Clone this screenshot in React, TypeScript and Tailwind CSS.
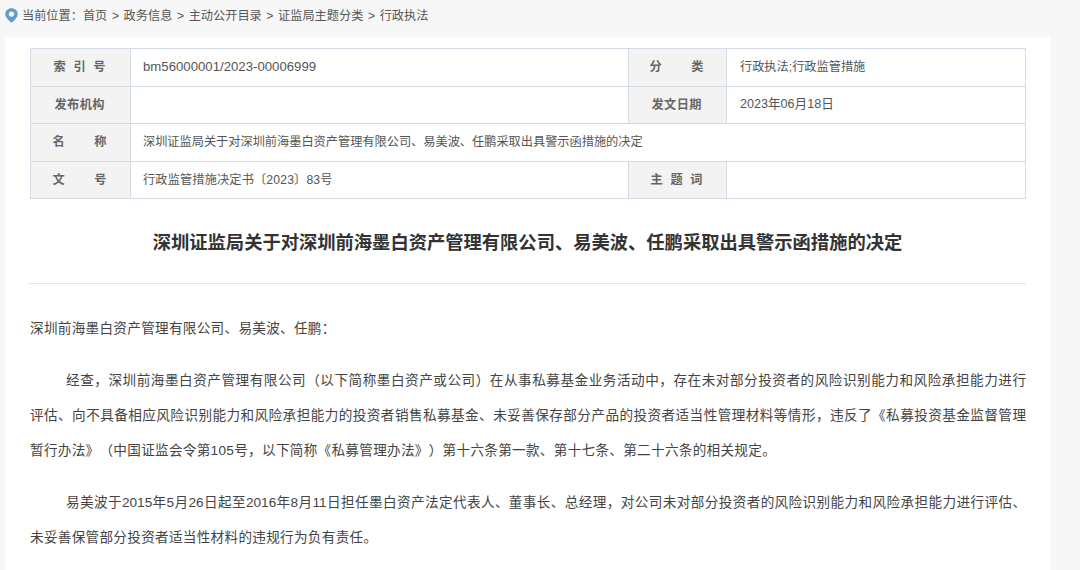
const cjk = "font-['Liberation_Sans','Noto_Sans_CJK_SC',sans-serif]";

function PinIcon() {
  return (
    <svg width="13" height="15" viewBox="0 0 13 15" className="shrink-0">
      <path d="M6.5 0.2C3 0.2 0.3 2.8 0.3 6.1c0 3.6 3.8 6.9 6.2 8.7 2.4-1.8 6.2-5.1 6.2-8.7C12.7 2.8 10 0.2 6.5 0.2z" fill="#5f9dc6" />
      <circle cx="6.5" cy="6.1" r="2.7" fill="#f7f7f7" />
    </svg>
  );
}

function Label({ chars, wide, width = 'w-[50px]' }: { chars: string[]; wide?: boolean; width?: string }) {
  return (
    <td className={`bg-[#f3f3f3] border border-[#d3dbe6] py-0 pl-0 pr-[2px] ${wide ? 'w-[100px]' : 'w-[98px]'}`}>
      <div className={`mx-auto flex justify-between font-semibold text-[#666] ${width}`}>
        {chars.map((c) => (
          <span key={c}>{c}</span>
        ))}
      </div>
    </td>
  );
}

function Value({ children, colSpan, right }: { children?: React.ReactNode; colSpan?: number; right?: boolean }) {
  return (
    <td colSpan={colSpan} className={`border border-[#d3dbe6] py-0 text-[#555] ${right ? 'pl-[13px]' : 'pl-[12px]'}`}>
      {children}
    </td>
  );
}

function InfoTable() {
  return (
    <table className="ml-px w-[996px] table-fixed border-collapse text-[12.2px] [text-spacing-trim:space-all]">
      <colgroup>
        <col className="w-[100px]" />
        <col className="w-[498px]" />
        <col className="w-[98px]" />
        <col />
      </colgroup>
      <tbody>
        <tr className="h-[37.5px]">
          <Label wide chars={['索', '引', '号']} width="w-[52px]" />
          <Value><span className="text-[13.2px]">bm56000001/2023-00006999</span></Value>
          <Label chars={['分', '类']} width="w-[54px]" />
          <Value right>行政执法;行政监管措施</Value>
        </tr>
        <tr className="h-[37.5px]">
          <Label wide chars={['发', '布', '机', '构']} />
          <Value />
          <Label chars={['发', '文', '日', '期']} />
          <Value right><span className="text-[12.6px]">2023年06月18日</span></Value>
        </tr>
        <tr className="h-[37.5px]">
          <Label wide chars={['名', '称']} width="w-[54px]" />
          <Value colSpan={3}>深圳证监局关于对深圳前海墨白资产管理有限公司、易美波、任鹏采取出具警示函措施的决定</Value>
        </tr>
        <tr className="h-[37.5px]">
          <Label wide chars={['文', '号']} width="w-[54px]" />
          <Value><span className="tracking-[0.15px]">行政监管措施决定书〔2023〕83号</span></Value>
          <Label chars={['主', '题', '词']} width="w-[52px]" />
          <Value />
        </tr>
      </tbody>
    </table>
  );
}

function Line({ children, indent, last }: { children: React.ReactNode; indent?: boolean; last?: boolean }) {
  return (
    <div
      className={`h-[35px] leading-[35px] ${indent ? 'pl-[36px]' : ''} ${
        last ? 'tracking-[0.3px] whitespace-nowrap' : 'text-justify [text-align-last:justify]'
      }`}
    >
      {children}
    </div>
  );
}

export default function App() {
  return (
    <div className={`h-[570px] w-[1080px] overflow-hidden bg-[#f7f7f7] ${cjk}`}>
      <div className="flex h-[37px] items-start gap-[4px] pl-[5px] pt-[8px] text-[12.2px] text-[#555]">
        <PinIcon />
        <span className="leading-[16px] whitespace-pre [word-spacing:1.2px]">当前位置：首页 &gt; 政务信息 &gt; 主动公开目录 &gt; 证监局主题分类 &gt; 行政执法</span>
      </div>

      <div className="ml-[5px] h-[533px] w-[1045px] bg-white pl-[24px] pt-[11px]">
        <InfoTable />

        <h1 className="mt-[30px] w-[997px] text-center text-[18.3px] leading-[28px] font-bold text-[#333]">
          深圳证监局关于对深圳前海墨白资产管理有限公司、易美波、任鹏采取出具警示函措施的决定
        </h1>

        <div className="mt-[26px] w-[997px] border-t border-[#e6e6e6]" />

        <div className="mt-[27px] w-[997px] pl-px text-[13.6px] text-[#444] [text-spacing-trim:space-all]">
          <Line last>深圳前海墨白资产管理有限公司、易美波、任鹏：</Line>
          <div className="mt-[17px]">
            <Line indent>经查，深圳前海墨白资产管理有限公司（以下简称墨白资产或公司）在从事私募基金业务活动中，存在未对部分投资者的风险识别能力和风险承担能力进行</Line>
            <Line>评估、向不具备相应风险识别能力和风险承担能力的投资者销售私募基金、未妥善保存部分产品的投资者适当性管理材料等情形，违反了《私募投资基金监督管理</Line>
            <Line last>暂行办法》（中国证监会令第105号，以下简称《私募管理办法》）第十六条第一款、第十七条、第二十六条的相关规定。</Line>
          </div>
          <div className="mt-[17px]">
            <Line indent>易美波于2015年5月26日起至2016年8月11日担任墨白资产法定代表人、董事长、总经理，对公司未对部分投资者的风险识别能力和风险承担能力进行评估、</Line>
            <Line last>未妥善保管部分投资者适当性材料的违规行为负有责任。</Line>
          </div>
        </div>
      </div>
    </div>
  );
}
